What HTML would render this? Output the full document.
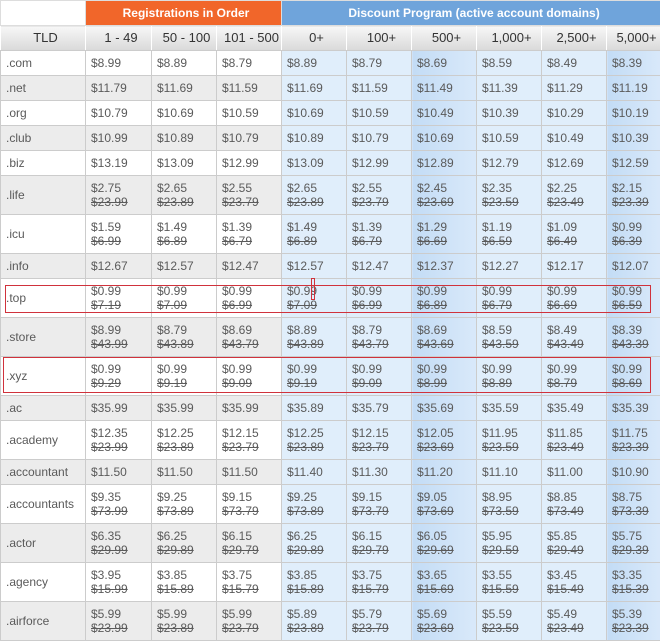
<!DOCTYPE html>
<html><head><meta charset="utf-8"><style>
*{margin:0;padding:0;box-sizing:border-box}
body{width:660px;height:642px;overflow:hidden;background:#fff;font-family:"Liberation Sans",Arial,sans-serif;position:relative}
table{border-collapse:collapse;table-layout:fixed;width:661px;position:absolute;left:0;top:0}
td,th{border:1px solid #ccc;font-size:12px;color:#5a5a5a;font-weight:normal;text-align:left;padding:0 0 0 5px;line-height:14px;vertical-align:middle;overflow:hidden;white-space:nowrap}
.h1 th{height:25px;color:#fff;font-weight:bold;text-align:center;font-size:12px;border-color:#ddd}
.or{background:#f1662a}
.bl{background:#6fa4db}
.h2 th{height:25px;text-align:center;color:#333;font-size:13px;background:linear-gradient(#f7f7f7,#d9d9d9);border-color:#ccc #fff #ccc #fff;border-left:1px solid #fff}
tr.g td{background:#ececec}
td.b{background:#e0eefb!important}
td.d{background:linear-gradient(90deg,#c3dcf5,#d9e9fa)!important}
s{text-decoration:line-through}
tr.s td{height:25px}
tr.t td{height:39px}
.box{position:absolute;border:1px solid #d0323c}
</style></head><body>
<table>
<colgroup><col style="width:85px"><col style="width:66px"><col style="width:65px"><col style="width:65px"><col style="width:65px"><col style="width:65px"><col style="width:65px"><col style="width:65px"><col style="width:65px"><col style="width:55px"></colgroup>
<tr class="h1"><th style="background:#fff;border-color:#ddd"></th><th class="or" colspan="3">Registrations in Order</th><th class="bl" colspan="6">Discount Program (active account domains)</th></tr>
<tr class="h2"><th>TLD</th><th>1 - 49</th><th>50 - 100</th><th>101 - 500</th><th>0+</th><th>100+</th><th>500+</th><th>1,000+</th><th>2,500+</th><th>5,000+</th></tr>
<tr class="s"><td>.com</td><td>$8.99</td><td>$8.89</td><td>$8.79</td><td class="b">$8.89</td><td class="b">$8.79</td><td class="d">$8.69</td><td class="b">$8.59</td><td class="b">$8.49</td><td class="d">$8.39</td></tr>
<tr class="s g"><td>.net</td><td>$11.79</td><td>$11.69</td><td>$11.59</td><td class="b">$11.69</td><td class="b">$11.59</td><td class="d">$11.49</td><td class="b">$11.39</td><td class="b">$11.29</td><td class="d">$11.19</td></tr>
<tr class="s"><td>.org</td><td>$10.79</td><td>$10.69</td><td>$10.59</td><td class="b">$10.69</td><td class="b">$10.59</td><td class="d">$10.49</td><td class="b">$10.39</td><td class="b">$10.29</td><td class="d">$10.19</td></tr>
<tr class="s g"><td>.club</td><td>$10.99</td><td>$10.89</td><td>$10.79</td><td class="b">$10.89</td><td class="b">$10.79</td><td class="d">$10.69</td><td class="b">$10.59</td><td class="b">$10.49</td><td class="d">$10.39</td></tr>
<tr class="s"><td>.biz</td><td>$13.19</td><td>$13.09</td><td>$12.99</td><td class="b">$13.09</td><td class="b">$12.99</td><td class="d">$12.89</td><td class="b">$12.79</td><td class="b">$12.69</td><td class="d">$12.59</td></tr>
<tr class="t g"><td>.life</td><td>$2.75<br><s>$23.99</s></td><td>$2.65<br><s>$23.89</s></td><td>$2.55<br><s>$23.79</s></td><td class="b">$2.65<br><s>$23.89</s></td><td class="b">$2.55<br><s>$23.79</s></td><td class="d">$2.45<br><s>$23.69</s></td><td class="b">$2.35<br><s>$23.59</s></td><td class="b">$2.25<br><s>$23.49</s></td><td class="d">$2.15<br><s>$23.39</s></td></tr>
<tr class="t"><td>.icu</td><td>$1.59<br><s>$6.99</s></td><td>$1.49<br><s>$6.89</s></td><td>$1.39<br><s>$6.79</s></td><td class="b">$1.49<br><s>$6.89</s></td><td class="b">$1.39<br><s>$6.79</s></td><td class="d">$1.29<br><s>$6.69</s></td><td class="b">$1.19<br><s>$6.59</s></td><td class="b">$1.09<br><s>$6.49</s></td><td class="d">$0.99<br><s>$6.39</s></td></tr>
<tr class="s g"><td>.info</td><td>$12.67</td><td>$12.57</td><td>$12.47</td><td class="b">$12.57</td><td class="b">$12.47</td><td class="d">$12.37</td><td class="b">$12.27</td><td class="b">$12.17</td><td class="d">$12.07</td></tr>
<tr class="t"><td>.top</td><td>$0.99<br><s>$7.19</s></td><td>$0.99<br><s>$7.09</s></td><td>$0.99<br><s>$6.99</s></td><td class="b">$0.99<br><s>$7.09</s></td><td class="b">$0.99<br><s>$6.99</s></td><td class="d">$0.99<br><s>$6.89</s></td><td class="b">$0.99<br><s>$6.79</s></td><td class="b">$0.99<br><s>$6.69</s></td><td class="d">$0.99<br><s>$6.59</s></td></tr>
<tr class="t g"><td>.store</td><td>$8.99<br><s>$43.99</s></td><td>$8.79<br><s>$43.89</s></td><td>$8.69<br><s>$43.79</s></td><td class="b">$8.89<br><s>$43.89</s></td><td class="b">$8.79<br><s>$43.79</s></td><td class="d">$8.69<br><s>$43.69</s></td><td class="b">$8.59<br><s>$43.59</s></td><td class="b">$8.49<br><s>$43.49</s></td><td class="d">$8.39<br><s>$43.39</s></td></tr>
<tr class="t"><td>.xyz</td><td>$0.99<br><s>$9.29</s></td><td>$0.99<br><s>$9.19</s></td><td>$0.99<br><s>$9.09</s></td><td class="b">$0.99<br><s>$9.19</s></td><td class="b">$0.99<br><s>$9.09</s></td><td class="d">$0.99<br><s>$8.99</s></td><td class="b">$0.99<br><s>$8.89</s></td><td class="b">$0.99<br><s>$8.79</s></td><td class="d">$0.99<br><s>$8.69</s></td></tr>
<tr class="s g"><td>.ac</td><td>$35.99</td><td>$35.99</td><td>$35.99</td><td class="b">$35.89</td><td class="b">$35.79</td><td class="d">$35.69</td><td class="b">$35.59</td><td class="b">$35.49</td><td class="d">$35.39</td></tr>
<tr class="t"><td>.academy</td><td>$12.35<br><s>$23.99</s></td><td>$12.25<br><s>$23.89</s></td><td>$12.15<br><s>$23.79</s></td><td class="b">$12.25<br><s>$23.89</s></td><td class="b">$12.15<br><s>$23.79</s></td><td class="d">$12.05<br><s>$23.69</s></td><td class="b">$11.95<br><s>$23.59</s></td><td class="b">$11.85<br><s>$23.49</s></td><td class="d">$11.75<br><s>$23.39</s></td></tr>
<tr class="s g"><td>.accountant</td><td>$11.50</td><td>$11.50</td><td>$11.50</td><td class="b">$11.40</td><td class="b">$11.30</td><td class="d">$11.20</td><td class="b">$11.10</td><td class="b">$11.00</td><td class="d">$10.90</td></tr>
<tr class="t"><td>.accountants</td><td>$9.35<br><s>$73.99</s></td><td>$9.25<br><s>$73.89</s></td><td>$9.15<br><s>$73.79</s></td><td class="b">$9.25<br><s>$73.89</s></td><td class="b">$9.15<br><s>$73.79</s></td><td class="d">$9.05<br><s>$73.69</s></td><td class="b">$8.95<br><s>$73.59</s></td><td class="b">$8.85<br><s>$73.49</s></td><td class="d">$8.75<br><s>$73.39</s></td></tr>
<tr class="t g"><td>.actor</td><td>$6.35<br><s>$29.99</s></td><td>$6.25<br><s>$29.89</s></td><td>$6.15<br><s>$29.79</s></td><td class="b">$6.25<br><s>$29.89</s></td><td class="b">$6.15<br><s>$29.79</s></td><td class="d">$6.05<br><s>$29.69</s></td><td class="b">$5.95<br><s>$29.59</s></td><td class="b">$5.85<br><s>$29.49</s></td><td class="d">$5.75<br><s>$29.39</s></td></tr>
<tr class="t"><td>.agency</td><td>$3.95<br><s>$15.99</s></td><td>$3.85<br><s>$15.89</s></td><td>$3.75<br><s>$15.79</s></td><td class="b">$3.85<br><s>$15.89</s></td><td class="b">$3.75<br><s>$15.79</s></td><td class="d">$3.65<br><s>$15.69</s></td><td class="b">$3.55<br><s>$15.59</s></td><td class="b">$3.45<br><s>$15.49</s></td><td class="d">$3.35<br><s>$15.39</s></td></tr>
<tr class="t g"><td>.airforce</td><td>$5.99<br><s>$23.99</s></td><td>$5.99<br><s>$23.89</s></td><td>$5.99<br><s>$23.79</s></td><td class="b">$5.89<br><s>$23.89</s></td><td class="b">$5.79<br><s>$23.79</s></td><td class="d">$5.69<br><s>$23.69</s></td><td class="b">$5.59<br><s>$23.59</s></td><td class="b">$5.49<br><s>$23.49</s></td><td class="d">$5.39<br><s>$23.39</s></td></tr>
</table>
<div class="box" style="left:5px;top:285px;width:646px;height:28px"></div>
<div class="box" style="left:311px;top:278px;width:4px;height:22px"></div>
<div class="box" style="left:3px;top:357px;width:648px;height:36px"></div>
</body></html>
